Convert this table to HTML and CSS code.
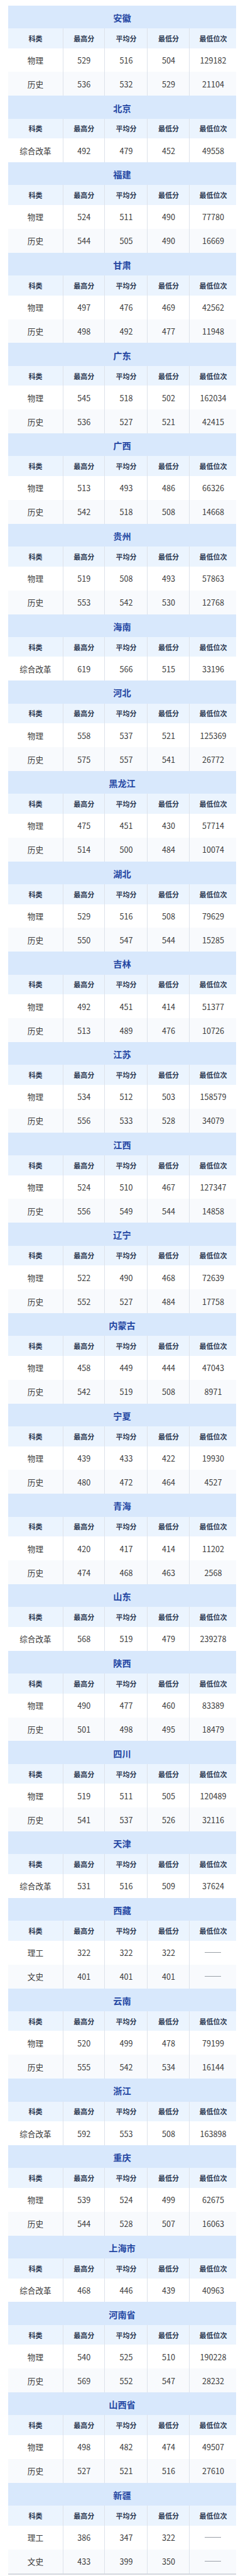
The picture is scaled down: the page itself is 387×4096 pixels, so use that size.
FILE: index.html
```html
<!DOCTYPE html>
<html lang="zh-CN">
<head>
<meta charset="utf-8">
<title>各省录取分数</title>
<link rel="stylesheet" href="styles.css">
</head>
<body>
<div class="board">

<section class="prov">
<div class="title">安徽</div>
<div class="row head"><div>科类</div><div>最高分</div><div>平均分</div><div>最低分</div><div>最低位次</div></div>
<div class="row data"><div>物理</div><div>529</div><div>516</div><div>504</div><div>129182</div></div>
<div class="row data alt"><div>历史</div><div>536</div><div>532</div><div>529</div><div>21104</div></div>
</section>

<section class="prov">
<div class="title">北京</div>
<div class="row head"><div>科类</div><div>最高分</div><div>平均分</div><div>最低分</div><div>最低位次</div></div>
<div class="row data"><div>综合改革</div><div>492</div><div>479</div><div>452</div><div>49558</div></div>
</section>

<section class="prov">
<div class="title">福建</div>
<div class="row head"><div>科类</div><div>最高分</div><div>平均分</div><div>最低分</div><div>最低位次</div></div>
<div class="row data"><div>物理</div><div>524</div><div>511</div><div>490</div><div>77780</div></div>
<div class="row data alt"><div>历史</div><div>544</div><div>505</div><div>490</div><div>16669</div></div>
</section>

<section class="prov">
<div class="title">甘肃</div>
<div class="row head"><div>科类</div><div>最高分</div><div>平均分</div><div>最低分</div><div>最低位次</div></div>
<div class="row data"><div>物理</div><div>497</div><div>476</div><div>469</div><div>42562</div></div>
<div class="row data alt"><div>历史</div><div>498</div><div>492</div><div>477</div><div>11948</div></div>
</section>

<section class="prov">
<div class="title">广东</div>
<div class="row head"><div>科类</div><div>最高分</div><div>平均分</div><div>最低分</div><div>最低位次</div></div>
<div class="row data"><div>物理</div><div>545</div><div>518</div><div>502</div><div>162034</div></div>
<div class="row data alt"><div>历史</div><div>536</div><div>527</div><div>521</div><div>42415</div></div>
</section>

<section class="prov">
<div class="title">广西</div>
<div class="row head"><div>科类</div><div>最高分</div><div>平均分</div><div>最低分</div><div>最低位次</div></div>
<div class="row data"><div>物理</div><div>513</div><div>493</div><div>486</div><div>66326</div></div>
<div class="row data alt"><div>历史</div><div>542</div><div>518</div><div>508</div><div>14668</div></div>
</section>

<section class="prov">
<div class="title">贵州</div>
<div class="row head"><div>科类</div><div>最高分</div><div>平均分</div><div>最低分</div><div>最低位次</div></div>
<div class="row data"><div>物理</div><div>519</div><div>508</div><div>493</div><div>57863</div></div>
<div class="row data alt"><div>历史</div><div>553</div><div>542</div><div>530</div><div>12768</div></div>
</section>

<section class="prov">
<div class="title">海南</div>
<div class="row head"><div>科类</div><div>最高分</div><div>平均分</div><div>最低分</div><div>最低位次</div></div>
<div class="row data"><div>综合改革</div><div>619</div><div>566</div><div>515</div><div>33196</div></div>
</section>

<section class="prov">
<div class="title">河北</div>
<div class="row head"><div>科类</div><div>最高分</div><div>平均分</div><div>最低分</div><div>最低位次</div></div>
<div class="row data"><div>物理</div><div>558</div><div>537</div><div>521</div><div>125369</div></div>
<div class="row data alt"><div>历史</div><div>575</div><div>557</div><div>541</div><div>26772</div></div>
</section>

<section class="prov">
<div class="title">黑龙江</div>
<div class="row head"><div>科类</div><div>最高分</div><div>平均分</div><div>最低分</div><div>最低位次</div></div>
<div class="row data"><div>物理</div><div>475</div><div>451</div><div>430</div><div>57714</div></div>
<div class="row data alt"><div>历史</div><div>514</div><div>500</div><div>484</div><div>10074</div></div>
</section>

<section class="prov">
<div class="title">湖北</div>
<div class="row head"><div>科类</div><div>最高分</div><div>平均分</div><div>最低分</div><div>最低位次</div></div>
<div class="row data"><div>物理</div><div>529</div><div>516</div><div>508</div><div>79629</div></div>
<div class="row data alt"><div>历史</div><div>550</div><div>547</div><div>544</div><div>15285</div></div>
</section>

<section class="prov">
<div class="title">吉林</div>
<div class="row head"><div>科类</div><div>最高分</div><div>平均分</div><div>最低分</div><div>最低位次</div></div>
<div class="row data"><div>物理</div><div>492</div><div>451</div><div>414</div><div>51377</div></div>
<div class="row data alt"><div>历史</div><div>513</div><div>489</div><div>476</div><div>10726</div></div>
</section>

<section class="prov">
<div class="title">江苏</div>
<div class="row head"><div>科类</div><div>最高分</div><div>平均分</div><div>最低分</div><div>最低位次</div></div>
<div class="row data"><div>物理</div><div>534</div><div>512</div><div>503</div><div>158579</div></div>
<div class="row data alt"><div>历史</div><div>556</div><div>533</div><div>528</div><div>34079</div></div>
</section>

<section class="prov">
<div class="title">江西</div>
<div class="row head"><div>科类</div><div>最高分</div><div>平均分</div><div>最低分</div><div>最低位次</div></div>
<div class="row data"><div>物理</div><div>524</div><div>510</div><div>467</div><div>127347</div></div>
<div class="row data alt"><div>历史</div><div>556</div><div>549</div><div>544</div><div>14858</div></div>
</section>

<section class="prov">
<div class="title">辽宁</div>
<div class="row head"><div>科类</div><div>最高分</div><div>平均分</div><div>最低分</div><div>最低位次</div></div>
<div class="row data"><div>物理</div><div>522</div><div>490</div><div>468</div><div>72639</div></div>
<div class="row data alt"><div>历史</div><div>552</div><div>527</div><div>484</div><div>17758</div></div>
</section>

<section class="prov">
<div class="title">内蒙古</div>
<div class="row head"><div>科类</div><div>最高分</div><div>平均分</div><div>最低分</div><div>最低位次</div></div>
<div class="row data"><div>物理</div><div>458</div><div>449</div><div>444</div><div>47043</div></div>
<div class="row data alt"><div>历史</div><div>542</div><div>519</div><div>508</div><div>8971</div></div>
</section>

<section class="prov">
<div class="title">宁夏</div>
<div class="row head"><div>科类</div><div>最高分</div><div>平均分</div><div>最低分</div><div>最低位次</div></div>
<div class="row data"><div>物理</div><div>439</div><div>433</div><div>422</div><div>19930</div></div>
<div class="row data alt"><div>历史</div><div>480</div><div>472</div><div>464</div><div>4527</div></div>
</section>

<section class="prov">
<div class="title">青海</div>
<div class="row head"><div>科类</div><div>最高分</div><div>平均分</div><div>最低分</div><div>最低位次</div></div>
<div class="row data"><div>物理</div><div>420</div><div>417</div><div>414</div><div>11202</div></div>
<div class="row data alt"><div>历史</div><div>474</div><div>468</div><div>463</div><div>2568</div></div>
</section>

<section class="prov">
<div class="title">山东</div>
<div class="row head"><div>科类</div><div>最高分</div><div>平均分</div><div>最低分</div><div>最低位次</div></div>
<div class="row data"><div>综合改革</div><div>568</div><div>519</div><div>479</div><div>239278</div></div>
</section>

<section class="prov">
<div class="title">陕西</div>
<div class="row head"><div>科类</div><div>最高分</div><div>平均分</div><div>最低分</div><div>最低位次</div></div>
<div class="row data"><div>物理</div><div>490</div><div>477</div><div>460</div><div>83389</div></div>
<div class="row data alt"><div>历史</div><div>501</div><div>498</div><div>495</div><div>18479</div></div>
</section>

<section class="prov">
<div class="title">四川</div>
<div class="row head"><div>科类</div><div>最高分</div><div>平均分</div><div>最低分</div><div>最低位次</div></div>
<div class="row data"><div>物理</div><div>519</div><div>511</div><div>505</div><div>120489</div></div>
<div class="row data alt"><div>历史</div><div>541</div><div>537</div><div>526</div><div>32116</div></div>
</section>

<section class="prov">
<div class="title">天津</div>
<div class="row head"><div>科类</div><div>最高分</div><div>平均分</div><div>最低分</div><div>最低位次</div></div>
<div class="row data"><div>综合改革</div><div>531</div><div>516</div><div>509</div><div>37624</div></div>
</section>

<section class="prov">
<div class="title">西藏</div>
<div class="row head"><div>科类</div><div>最高分</div><div>平均分</div><div>最低分</div><div>最低位次</div></div>
<div class="row data"><div>理工</div><div>322</div><div>322</div><div>322</div><div><span class="dash"></span></div></div>
<div class="row data alt"><div>文史</div><div>401</div><div>401</div><div>401</div><div><span class="dash"></span></div></div>
</section>

<section class="prov">
<div class="title">云南</div>
<div class="row head"><div>科类</div><div>最高分</div><div>平均分</div><div>最低分</div><div>最低位次</div></div>
<div class="row data"><div>物理</div><div>520</div><div>499</div><div>478</div><div>79199</div></div>
<div class="row data alt"><div>历史</div><div>555</div><div>542</div><div>534</div><div>16144</div></div>
</section>

<section class="prov">
<div class="title">浙江</div>
<div class="row head"><div>科类</div><div>最高分</div><div>平均分</div><div>最低分</div><div>最低位次</div></div>
<div class="row data"><div>综合改革</div><div>592</div><div>553</div><div>508</div><div>163898</div></div>
</section>

<section class="prov">
<div class="title">重庆</div>
<div class="row head"><div>科类</div><div>最高分</div><div>平均分</div><div>最低分</div><div>最低位次</div></div>
<div class="row data"><div>物理</div><div>539</div><div>524</div><div>499</div><div>62675</div></div>
<div class="row data alt"><div>历史</div><div>544</div><div>528</div><div>507</div><div>16063</div></div>
</section>

<section class="prov">
<div class="title">上海市</div>
<div class="row head"><div>科类</div><div>最高分</div><div>平均分</div><div>最低分</div><div>最低位次</div></div>
<div class="row data"><div>综合改革</div><div>468</div><div>446</div><div>439</div><div>40963</div></div>
</section>

<section class="prov">
<div class="title">河南省</div>
<div class="row head"><div>科类</div><div>最高分</div><div>平均分</div><div>最低分</div><div>最低位次</div></div>
<div class="row data"><div>物理</div><div>540</div><div>525</div><div>510</div><div>190228</div></div>
<div class="row data alt"><div>历史</div><div>569</div><div>552</div><div>547</div><div>28232</div></div>
</section>

<section class="prov">
<div class="title">山西省</div>
<div class="row head"><div>科类</div><div>最高分</div><div>平均分</div><div>最低分</div><div>最低位次</div></div>
<div class="row data"><div>物理</div><div>498</div><div>482</div><div>474</div><div>49507</div></div>
<div class="row data alt"><div>历史</div><div>527</div><div>521</div><div>516</div><div>27610</div></div>
</section>

<section class="prov">
<div class="title">新疆</div>
<div class="row head"><div>科类</div><div>最高分</div><div>平均分</div><div>最低分</div><div>最低位次</div></div>
<div class="row data"><div>理工</div><div>386</div><div>347</div><div>322</div><div><span class="dash"></span></div></div>
<div class="row data alt"><div>文史</div><div>433</div><div>399</div><div>350</div><div><span class="dash"></span></div></div>
</section>

</div>
</body>
</html>
```

FILE: styles.css
```css
* {
  box-sizing: border-box;
}

html, body {
  margin: 0;
  padding: 0;
  background: #ffffff;
}

body {
  padding: 8.7px 10.6px 0 12.6px;
  font-family: "Noto Sans CJK SC", "Noto Sans", sans-serif;
  color: #3a3a3a;
}

.board {
  width: 363.8px;
  border-bottom: 2px solid #d3d7de;
}

.title {
  height: 36.3px;
  display: flex;
  align-items: center;
  justify-content: center;
  padding-top: 2px;
  background: #d8e8fc;
  color: #2547a3;
  font-size: 14.2px;
  font-weight: 700;
  letter-spacing: 0;
}

.row {
  display: grid;
  grid-template-columns: 87.6px 66.3px 67.9px 67.1px 1fr;
}

.row > div {
  display: flex;
  align-items: center;
  justify-content: center;
  white-space: nowrap;
}

.row > div + div {
  border-left: 1px solid #dde2ea;
}

.head {
  height: 31.6px;
  background: #ebf4fe;
  color: #2d3a52;
  font-size: 11px;
  font-weight: 700;
}

.data {
  height: 37.9px;
  background: #ffffff;
  font-size: 12.6px;
  color: #3b3b3b;
}

.data.alt {
  background: #f8fafd;
}

.dash {
  display: block;
  width: 26px;
  height: 1px;
  background: #9aa0a8;
}
```
